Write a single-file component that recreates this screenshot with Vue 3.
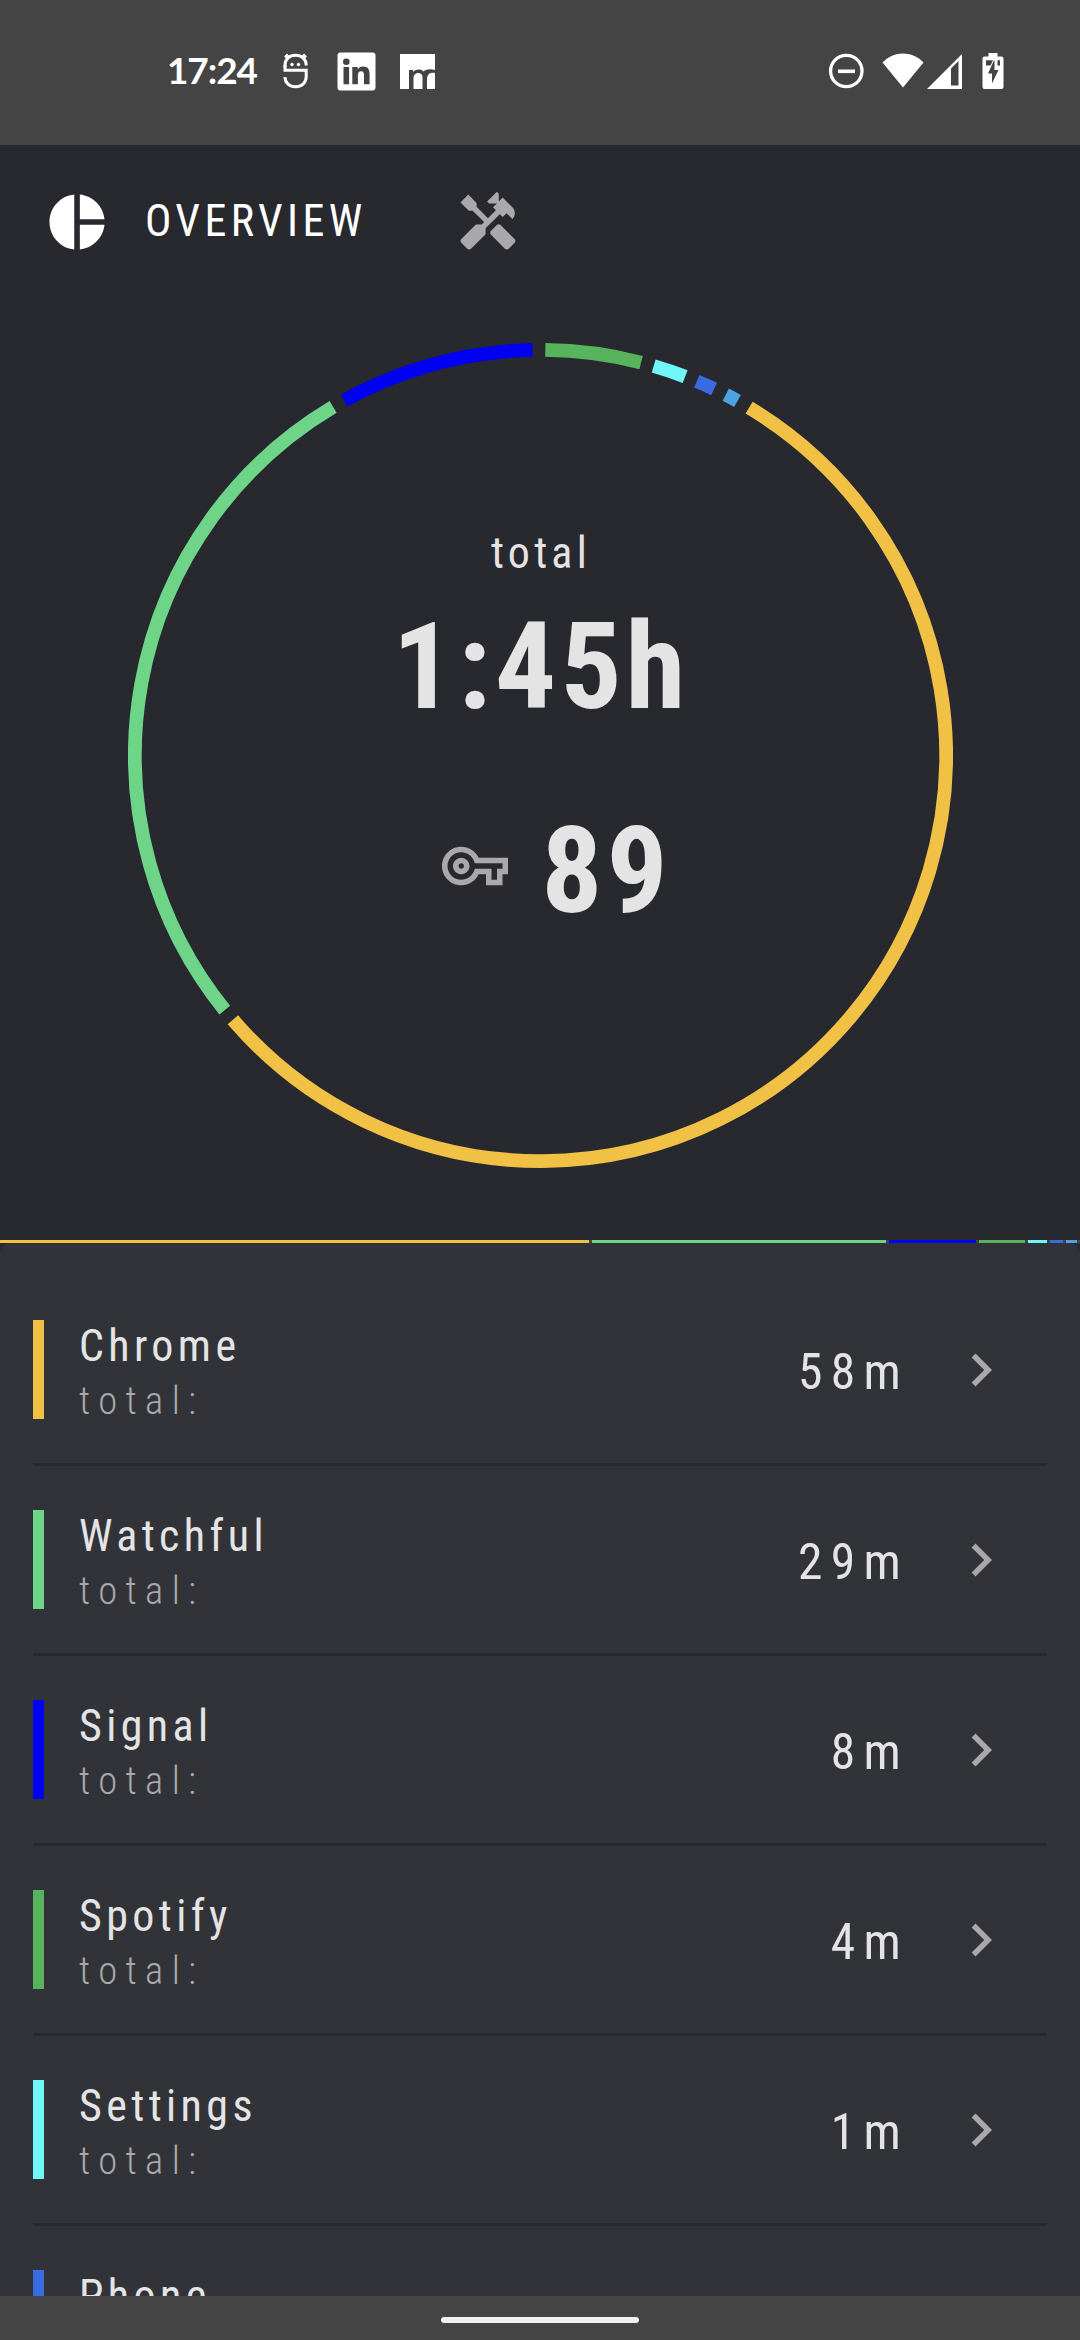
<script setup>
const CX = 412.5
const R = 405.6

const segments = [
  { color: '#57b45d', from: 0.68, to: 14.36 },
  { color: '#71f6f8', from: 16.2, to: 20.89 },
  { color: '#386ce0', from: 22.67, to: 25.34 },
  { color: '#4da3e2', from: 27.18, to: 29.06 },
  { color: '#f0c145', from: 30.95, to: 229.33 },
  { color: '#6ed588', from: 231.12, to: 329.25 },
  { color: '#0000f2', from: 331.05, to: 358.87 }
]

const strip = [
  { color: '#f0c145', width: 589 },
  { color: '#6ed588', width: 294 },
  { color: '#0000f2', width: 87 },
  { color: '#57b45d', width: 46 },
  { color: '#71f6f8', width: 19 },
  { color: '#386ce0', width: 13 },
  { color: '#4da3e2', width: 11 }
]

const apps = [
  { name: 'Chrome', time: '58m', color: '#f0c145' },
  { name: 'Watchful', time: '29m', color: '#6ed588' },
  { name: 'Signal', time: '8m', color: '#0000f2' },
  { name: 'Spotify', time: '4m', color: '#57b45d' },
  { name: 'Settings', time: '1m', color: '#71f6f8' },
  { name: 'Phone', time: '', color: '#386ce0' }
]

function point(deg) {
  const a = (deg * Math.PI) / 180
  return `${(CX + R * Math.sin(a)).toFixed(2)} ${(CX - R * Math.cos(a)).toFixed(2)}`
}

function arc(s) {
  const large = s.to - s.from > 180 ? 1 : 0
  return `M${point(s.from)}A${R} ${R} 0 ${large} 1 ${point(s.to)}`
}
</script>

<template>
  <div class="screen">
    <header class="status">
      <span class="clock">17:24</span>
      <svg class="s-bug" width="26" height="36" viewBox="0 0 26 36" fill="none" stroke="#fff" stroke-width="3">
        <path d="M2 14.500V12.500C2 6 6.500 2.200 12.500 2.200S23.200 6 23.200 12.500" />
        <path d="M2.500 2L6 5.500M22.500 2L19 5.500" stroke-width="4" />
        <path d="M2 12V17.300M0.500 17.300H23.200V23.500C23.200 30 18.500 33.700 12.500 33.700S2 30 2 24" />
        <circle cx="9" cy="11.500" r="1.700" fill="#fff" stroke="none" />
        <circle cx="15.500" cy="11.500" r="1.700" fill="#fff" stroke="none" />
      </svg>
      <svg class="s-in" width="39" height="39" viewBox="0 0 39 39">
        <rect x="0.500" y="0.500" width="38" height="38" rx="3" fill="#fff" />
        <g fill="#444">
          <circle cx="9.300" cy="9.800" r="3.300" />
          <rect x="6.500" y="15" width="5.600" height="17.300" />
          <path d="M15.300 15H20.700V17.400C21.700 15.600 23.700 14.500 26.100 14.500C31.300 14.500 32.600 17.700 32.600 22.600V32.300H27V23.700C27 21.500 26.700 19.300 24.200 19.300C21.600 19.300 20.900 21.300 20.900 23.600V32.300H15.300Z" />
        </g>
      </svg>
      <svg class="s-m" width="35" height="35" viewBox="0 0 35 35">
        <rect width="35" height="35" fill="#fff" />
        <path d="M9 35V16H13V18C15 15 21 14.500 23.500 17.500C26 15 31 14.500 35 16V19C31 18 27.500 19.500 27 24V35H22.500V23C22.500 17.500 13.500 17.500 13.500 24V35Z" fill="#444" />
      </svg>
      <span class="spacer"></span>
      <svg class="s-dnd" width="36" height="36" viewBox="0 0 36 36" fill="none" stroke="#fff">
        <circle cx="18.300" cy="18" r="15.700" stroke-width="3.300" />
        <path d="M10 18.300H27" stroke-width="3.600" />
      </svg>
      <svg class="s-wifi" width="42" height="35" viewBox="0 0 42 35">
        <path d="M0.500 9.500C12 -2.500 30 -2.500 41.500 9.500L21 34.600Z" fill="#fff" />
      </svg>
      <svg class="s-sig" width="35" height="35" viewBox="0 0 35 35">
        <path fill="#fff" fill-rule="evenodd" d="M0 35L35 0V35ZM24 14.500V31.500H31.500V7Z" />
      </svg>
      <svg class="s-bat" width="22" height="36" viewBox="0 0 22 36">
        <path d="M6.500 0H15.500V3.500H19.500Q21.500 3.500 21.500 5.500V34Q21.500 36 19.500 36H2.500Q0.500 36 0.500 34V5.500Q0.500 3.500 2.500 3.500H6.500Z" fill="#fff" />
        <path d="M12 7.300L6 20.500H10V30.500L16.500 17H12.500V7.300Z" fill="#444" />
        <path d="M4 7.300H11L8.500 12.500H4ZM15.500 7.300H18V12.500H15.500Z" fill="#444" />
      </svg>
    </header>

    <section class="top">
      <nav class="tabs">
        <svg class="pie" width="66" height="66" viewBox="0 0 24 24" fill="#fff">
          <path d="M11 2v20c-5.070-.5-9-4.790-9-10s3.930-9.500 9-10zm2.030 0v8.990H22c-.47-4.740-4.240-8.520-8.970-8.990zm0 11.010V22c4.740-.47 8.500-4.250 8.970-8.990h-8.970z" />
        </svg>
        <span class="tab-label">OVERVIEW</span>
        <svg class="tools" width="66" height="66" viewBox="0 0 24 24" fill="#a9a9ab">
          <path d="M21.670 18.170l-5.300-5.300h-.99l-2.540 2.540v.99l5.300 5.300c.39.39 1.020.39 1.410 0l2.120-2.120c.39-.38.39-1.020 0-1.410z" />
          <path d="M17.340 10.190l1.410-1.410 2.120 2.120c1.170-1.170 1.170-3.070 0-4.240l-3.540-3.540-1.410 1.410V1.710L15.220 1l-3.540 3.540.71.71h2.830l-1.410 1.410 1.060 1.060-2.890 2.890-4.130-4.130V5.060L4.830 2.040 2 4.870 5.030 7.900h1.410l4.130 4.130-.85.85H7.600l-5.300 5.300c-.39.39-.39 1.020 0 1.410l2.120 2.120c.39.39 1.020.39 1.410 0l5.300-5.300v-2.120l5.150-5.150 1.050 1.050z" />
        </svg>
      </nav>

      <div class="ring">
        <svg class="arcs" viewBox="0 0 825 825" fill="none" stroke-width="13.750">
          <path v-for="s in segments" :key="s.color" :d="arc(s)" :stroke="s.color" />
        </svg>
        <div class="summary">
          <span class="caption">total</span>
          <span class="big hours">1:45h</span>
          <div class="unlocks">
            <svg class="key" width="66" height="66" viewBox="0 0 24 24" fill="#a9a9ab">
              <path d="M22 19h-6v-4h-2.680c-1.140 2.420-3.600 4-6.320 4-3.860 0-7-3.140-7-7s3.140-7 7-7c2.720 0 5.170 1.580 6.320 4H24v6h-2v4zm-4-2h2v-4h2v-2H11.940l-.23-.67C11.010 8.340 9.110 7 7 7c-2.760 0-5 2.240-5 5s2.240 5 5 5c2.110 0 4.010-1.340 4.710-3.330l.23-.67H18v4zM7 15c-1.650 0-3-1.350-3-3s1.350-3 3-3 3 1.350 3 3-1.350 3-3 3zm0-4c-.55 0-1 .45-1 1s.45 1 1 1 1-.45 1-1-.45-1-1-1z" />
            </svg>
            <span class="big">89</span>
          </div>
        </div>
      </div>
    </section>

    <div class="strip">
      <i v-for="s in strip" :key="s.color" :style="{ width: s.width + 'px', background: s.color }"></i>
    </div>

    <main class="list-wrap">
      <ul class="list">
        <li v-for="a in apps" :key="a.name" class="row">
          <span class="bar" :style="{ background: a.color }"></span>
          <div class="names">
            <span class="name">{{ a.name }}</span>
            <span v-if="a.time" class="sub">total:</span>
          </div>
          <span v-if="a.time" class="time">{{ a.time }}</span>
          <svg class="chev" width="66" height="66" viewBox="0 0 24 24" fill="#a9a9ab">
            <path d="M10 6L8.590 7.410 13.170 12l-4.580 4.590L10 18l6-6z" />
          </svg>
        </li>
      </ul>
    </main>

    <footer class="gesture"><span class="pill"></span></footer>
  </div>
</template>

<style>
body {
  margin: 0;
  background: #28282f;
}
</style>

<style scoped>
.screen {
  width: 1080px;
  height: 2340px;
  display: flex;
  flex-direction: column;
  overflow: hidden;
  background: #28282f;
  color: #e4e4e5;
  font-family: "Roboto Condensed", Roboto, sans-serif;
  font-stretch: 75%;
}
svg {
  display: block;
  flex: none;
}
.status {
  flex: none;
  box-sizing: border-box;
  height: 145px;
  padding: 0 76px 3px 167px;
  display: flex;
  align-items: center;
  background: #444;
}
.clock {
  width: 116px;
  flex: none;
  padding-bottom: 2px;
  font: 700 37px/48px Lato, sans-serif;
  letter-spacing: -1.1px;
  color: #fff;
}
.s-in { margin-left: 28px; }
.s-m { margin-left: 24px; }
.spacer { flex: 1; }
.s-dnd { margin-bottom: 1px; }
.s-wifi { margin-left: 18px; margin-bottom: 1px; }
.s-sig { margin-left: 3px; }
.s-bat { margin-left: 20px; }
.top {
  flex: none;
  height: 1095px;
  display: flex;
  flex-direction: column;
}
.tabs {
  height: 153px;
  padding: 0 44px;
  display: flex;
  align-items: center;
}
.tab-label {
  width: 310px;
  margin-left: 35px;
  padding-bottom: 2px;
  font-size: 44px;
  line-height: 52px;
  letter-spacing: 4.4px;
  color: #fff;
}
.ring {
  width: 825px;
  height: 825px;
  margin: 45px auto 0;
  display: grid;
}
.arcs, .summary {
  grid-area: 1 / 1;
}
.arcs {
  width: 825px;
  height: 825px;
}
.summary {
  display: flex;
  flex-direction: column;
  align-items: center;
  padding: 184px 0 0 2px;
}
.caption {
  font-size: 44px;
  line-height: 52px;
  letter-spacing: 4.2px;
}
.big {
  font-size: 121px;
  line-height: 142px;
  font-weight: 700;
  letter-spacing: 4.2px;
}
.hours {
  margin-top: 17px;
}
.unlocks {
  margin-top: 62px;
  padding-left: 32px;
  display: flex;
  align-items: center;
  gap: 33px;
}
.key {
  margin-bottom: 10px;
}
.strip {
  flex: none;
  height: 3px;
  display: flex;
  gap: 3px;
  background: #444;
}
.list-wrap {
  height: 1053px;
  flex: none;
  overflow: hidden;
}
.list {
  margin: 0;
  padding: 33px 33px 0;
  list-style: none;
  background: #323338;
  border-radius: 11px 11px 0 0;
}
.row {
  height: 187px;
  border-bottom: 3px solid #28282f;
  display: flex;
  align-items: center;
}
.bar {
  width: 11px;
  height: 99px;
  flex: none;
}
.names {
  flex: 1;
  height: 99px;
  margin-left: 35px;
  display: flex;
  flex-direction: column;
}
.name {
  font-size: 44px;
  line-height: 52px;
  letter-spacing: 4.4px;
}
.sub {
  font-size: 38.5px;
  line-height: 58px;
  font-weight: 300;
  letter-spacing: 8.4px;
  color: #a9a9ab;
}
.time {
  font-size: 49.5px;
  line-height: 58px;
  padding-top: 4px;
  letter-spacing: 8.25px;
}
.chev {
  margin: 0 33px 0 39px;
}
.gesture {
  flex: none;
  height: 44px;
  display: flex;
  align-items: center;
  justify-content: center;
  background: #444;
}
.pill {
  width: 198px;
  height: 6px;
  margin-top: 4px;
  border-radius: 3px;
  background: #f0f0f0;
}
</style>
